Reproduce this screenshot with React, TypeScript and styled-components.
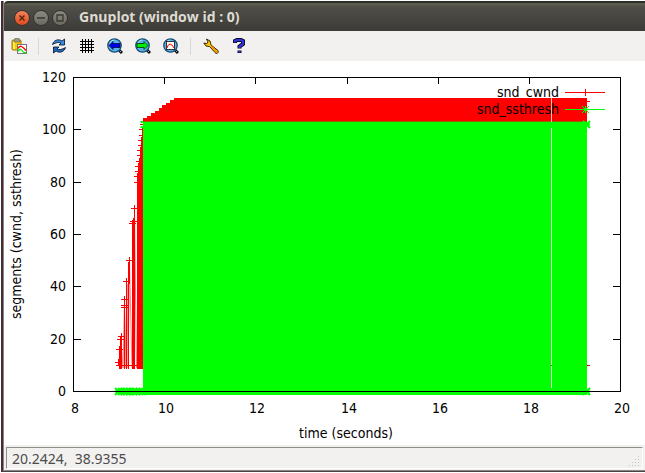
import React from "react";
import styled, { createGlobalStyle, css } from "styled-components";

const GlobalStyle = createGlobalStyle`
  *, *::before, *::after { box-sizing: border-box; }
  body { margin: 0; background: #fff; }
`;

const Desktop = styled.div`
  background: #fff;
  padding: 1px 0 1px 1px;
  overflow: hidden;
`;

const Frame = styled.main`
  background: #fff;
  border-left: 2px solid #452d38;
  border-bottom: 1px solid #4b4148;
`;

const Inner = styled.div`
  border-left: 1px solid #8b8685;
  border-bottom: 1px solid #8b8784;
`;

const TitleBar = styled.header`
  display: flex;
  align-items: center;
  gap: 3px;
  height: 30px;
  padding: 2px 10px 0;
  border-top: 2px solid #2b2f28;
  border-top-left-radius: 4px;
  background: linear-gradient(#5b5b4e 0, #5b5b4e 2px, #504f48 3px, #3c3b37 100%);
`;

const WindowButton = styled.button<{ $close?: boolean }>`
  display: grid;
  place-items: center;
  width: 16px;
  height: 16px;
  padding: 0;
  border: 1px solid #34332f;
  border-radius: 50%;
  color: #383731;
  background: linear-gradient(#8b8a80, #6b6a61);
  ${(p) =>
    p.$close &&
    css`
      color: #5b2411;
      background: linear-gradient(#f5835c, #df4a1c);
    `}
`;

const Title = styled.h1`
  margin: 0 0 2px 8px;
  color: #dfdbd2;
  font: bold 14px/20px "Open Sans", "Noto Sans", sans-serif;
`;

const Toolbar = styled.nav`
  display: flex;
  align-items: center;
  height: 30px;
  padding: 0 1px;
  background: #f2f1f0;
`;

const Tool = styled.button`
  display: grid;
  place-items: center;
  width: 28px;
  height: 28px;
  padding: 0;
  border: 0;
  background: transparent;
`;

const Divider = styled.span`
  width: 1px;
  height: 17px;
  margin: 0 6px 0 5px;
  background: #d9d7d4;
`;

const Plot = styled.svg`
  display: block;
  width: 100%;
  height: auto;
  background: #fff;
  font: 14px "DejaVu Sans Condensed", "DejaVu Sans", sans-serif;
`;

const StatusBar = styled.footer`
  display: flex;
  padding: 2px 2px 1px;
  background: #f2f1f0;
`;

const StatusField = styled.div`
  display: flex;
  flex: 1;
  align-items: flex-start;
  justify-content: space-between;
  height: 22px;
  padding-left: 5px;
  border: 1px solid #fff;
  border-top-color: #8f8e8b;
  border-left-color: #8f8e8b;
  color: #4c4c4c;
  font: 14px/22px "Noto Sans", sans-serif;
  white-space: pre;
`;

const Grip = styled.svg`
  align-self: flex-end;
`;

const iconProps = { width: 16, height: 16, viewBox: "0 0 16 16", "aria-hidden": true };

const PasteIcon = () => (
  <svg {...iconProps}>
    <rect x="1" y="2" width="9" height="10" rx="1" fill="#f6c900" stroke="#9a7600" />
    <rect x="2" y="3" width="2" height="8" fill="#ffe760" />
    <path d="M3 2h1V0h4v2h1v2H3z" fill="#a09b8a" stroke="#6e6444" strokeWidth=".6" />
    <rect x="6.5" y="6.5" width="9" height="9" fill="#fff" stroke="#777" />
    <path d="M7 10.500q1.500-3 3.500-2t4.500 4" fill="none" stroke="#f00" strokeWidth="1.300" />
    <path d="M7 13.500q2-4 4-1t4 2" fill="none" stroke="#0e0" strokeWidth="1.300" />
  </svg>
);

const RefreshIcon = () => (
  <svg {...iconProps} stroke="#020d22" strokeWidth=".8" strokeLinejoin="round">
    <path d="M1.500 6.500C2.500 2.500 7 .3 11 3l2.500-2v6H8l2-2C7.500 3.800 5 4.500 1.500 6.500z" fill="#3b8de0" />
    <path d="M14.500 9.500c-1 4-5.500 6.200-9.500 3.500l-2.500 2V9H8l-2 2c2.500 1.200 5 .5 8.500-1.500z" fill="#1e68bd" />
  </svg>
);

const GridIcon = () => (
  <svg {...iconProps} stroke="#000" shapeRendering="crispEdges">
    <path d="M3.500 1v14M6.500 1v14M9.500 1v14M12.500 1v14M1 3.500h14M1 6.500h14M1 9.500h14M1 12.500h14" />
  </svg>
);

const Lens = ({ children }: { children: React.ReactNode }) => (
  <svg {...iconProps}>
    <path d="M12 12l3 3" stroke="#111" strokeWidth="3" />
    <path d="M12.500 12.500l1.500 1.500" stroke="#60bce8" strokeWidth="1" />
    <circle cx="7.500" cy="7.500" r="6.700" fill="#56b2e9" stroke="#174d73" strokeWidth="1.300" />
    <path d="M3 5q1-3 4-3" stroke="#abe0fa" fill="none" />
    {children}
  </svg>
);

const PreviousIcon = () => (
  <Lens>
    <path d="M2 7.500l4-4v2h7v4H6v2z" fill="#0000e8" stroke="#001040" strokeWidth=".8" />
  </Lens>
);

const NextIcon = () => (
  <Lens>
    <path d="M13 7.500l-4-4v2H2v4h7v2z" fill="#00f000" stroke="#06440c" strokeWidth=".9" />
  </Lens>
);

const FitIcon = () => (
  <Lens>
    <rect x="3.500" y="3.500" width="8" height="8" fill="#fff" stroke="#333" />
    <path d="M4 10q1-4 3-4t4 4" fill="none" stroke="#f00" />
  </Lens>
);

const WrenchIcon = () => (
  <svg {...iconProps}>
    <path
      d="M3.500 1L7 3l1 4 7 5.500q1 2-.7 2.800Q13 16 12 14.500L6.500 8.500 3 8 .8 5l3 .7L5 4z"
      fill="#ffcf08"
      stroke="#3b2600"
      strokeLinejoin="round"
    />
    <path d="M8 8l6 6" stroke="#f08a00" strokeWidth="1.500" />
  </svg>
);

const HelpIcon = () => (
  <svg {...iconProps} fill="none">
    <path d="M4 5V3l2-1h4l2 1v3L8.500 8.500v2M8.500 12.500V15" stroke="#05051f" strokeWidth="4" />
    <path d="M4 4.500V3l2-1h4l2 1v3L8.500 8.500V10M8.500 13v1.500" stroke="#3434dd" strokeWidth="2.200" />
  </svg>
);

const xTicks = [8, 10, 12, 14, 16, 18, 20].map((v, i) => ({ v, x: Math.round(73 + (i * 547) / 6) }));
const yTicks = [120, 100, 80, 60, 40, 20, 0].map((v, i) => ({ v, y: Math.round(77 + (i * 314) / 6) }));

const rampMarks = [
  [134, 182], [134, 176], [135, 171], [135, 166], [136, 161], [137, 155],
  [137, 150], [138, 145], [138, 140], [139, 135], [139, 129],
];

const plusMarks = [
  [134, 208], [133, 221], [132, 223], [129, 260], [126, 281], [124, 299],
  [124, 305], [124, 307], [121, 336], [120, 339], [119, 349], [118, 362], [119, 365],
];

const startCrosses = [118, 121, 124, 126, 129, 133, 136, 139, 142];

const cross = (x: number, y: number) => `M${x - 3} ${y - 3}l7 7m0-7l-7 7M${x - 3} ${y}.5h7`;

const Axes = () => (
  <g stroke="#000" fill="none" shapeRendering="crispEdges">
    <rect x="73.500" y="77.500" width="547" height="314" />
    {xTicks.slice(1, -1).map(({ v, x }) => (
      <path key={v} d={`M${x}.5 77v7M${x}.5 391v-6`} />
    ))}
    {yTicks.slice(1, -1).map(({ v, y }) => (
      <path key={v} d={`M73 ${y}.5h8M620 ${y}.5h-7`} />
    ))}
  </g>
);

const Labels = () => (
  <g>
    {xTicks.map(({ v, x }) => (
      <text key={v} x={x + 2} y="413" textAnchor="middle">{v}</text>
    ))}
    {yTicks.map(({ v, y }) => (
      <text key={v} x="66" y={y + 5} textAnchor="end">{v}</text>
    ))}
    <text x="346" y="438" textAnchor="middle">time (seconds)</text>
    <text transform="translate(21 234) rotate(-90)" textAnchor="middle">segments (cwnd, ssthresh)</text>
  </g>
);

const CwndSeries = () => (
  <g shapeRendering="crispEdges">
    <path
      d="M121 341L123 368 124.500 300 126 368 127 284 128 368 129.500 264 132 368M134.500 212L136.500 368"
      stroke="#ff8080" fill="none" shapeRendering="auto"
    />
    <path
      d="M143 122v-4h4v-2h4v-3h4v-2h4v-3h3v-3h4v-2h4v-3h4v-2h413v24zM143 128h-1v9h-1v10h-1v11h-1v5h-1v10h-1v196h6zM132 369V222h1v-3h1v-14h1v164zM119 369v-23h1v-8h2v31z"
      fill="#f00"
    />
    <path d="M124.500 296v73M126.500 278v91M128.500 262v107M129.500 257v27M121.500 333v12" stroke="#f00" fill="none" />
    <path d={plusMarks.map(([x, y]) => `M${x - 3} ${y}.5h7M${x}.5 ${y - 3}v7`).join("")} stroke="#f00" />
    <path d={rampMarks.map(([x, y]) => `M${x} ${y}.5H143`).join("")} stroke="#f00" />
    <path d="M116 365.500h21M587 101.500h3M587 365.500h3M140 124.500h3" stroke="#f00" />
    <path d="M565 92.500h40M585.500 89v7" stroke="#f00" />
  </g>
);

const SsthreshSeries = () => (
  <g>
    <path d="M143 121h444v274H143z" fill="#0f0" shapeRendering="crispEdges" />
    <path d="M143 121.500h444" stroke="#986000" shapeRendering="crispEdges" />
    <path d="M140 121h3v2h-2zM140 128l1-2h2v2z" fill="#0f0" />
    <path d="M551.500 98v24" stroke="#ffc4c4" />
    <path d="M551.500 128v260" stroke="#d6f0c6" />
    <path d="M551.500 365v1" stroke="#b84b00" />
    <path d={startCrosses.map((x) => cross(x, 391)).join("") + cross(586, 391) + cross(586, 124)} stroke="#0f0" strokeWidth="2" fill="none" />
    <path d={`M565 109.500h40${cross(585, 109)}M585.500 106v7`} stroke="#0f0" fill="none" />
  </g>
);

const gripDots = [
  [9, 1], [6, 4], [9, 4], [3, 7], [6, 7], [9, 7], [0, 10], [3, 10], [6, 10], [9, 10],
];

export default function App() {
  return (
    <Desktop>
      <GlobalStyle />
      <Frame>
        <Inner>
          <TitleBar>
            <WindowButton $close aria-label="Close">
              <svg width="8" height="8" viewBox="0 0 8 8" stroke="currentColor" strokeWidth="1.500"><path d="M1.500 1.500l5 5m0-5l-5 5" /></svg>
            </WindowButton>
            <WindowButton aria-label="Minimize">
              <svg width="8" height="8" viewBox="0 0 8 8" stroke="currentColor" strokeWidth="1.500"><path d="M0 4h8" /></svg>
            </WindowButton>
            <WindowButton aria-label="Maximize">
              <svg width="8" height="8" viewBox="0 0 8 8" stroke="currentColor" strokeWidth="1.300" fill="none"><path d="M1 1h6v6H1z" /></svg>
            </WindowButton>
            <Title>Gnuplot (window id : 0)</Title>
          </TitleBar>
          <Toolbar aria-label="Plot tools">
            <Tool aria-label="Copy to clipboard"><PasteIcon /></Tool>
            <Divider />
            <Tool aria-label="Replot"><RefreshIcon /></Tool>
            <Tool aria-label="Toggle grid"><GridIcon /></Tool>
            <Tool aria-label="Previous zoom"><PreviousIcon /></Tool>
            <Tool aria-label="Next zoom"><NextIcon /></Tool>
            <Tool aria-label="Autoscale"><FitIcon /></Tool>
            <Divider />
            <Tool aria-label="Configure"><WrenchIcon /></Tool>
            <Tool aria-label="Help"><HelpIcon /></Tool>
          </Toolbar>
          <Plot viewBox="4 61 641 384" role="img" aria-label="Segments over time">
            <Axes />
            <Labels />
            <text x="559" y="97" textAnchor="end">snd_cwnd</text>
            <CwndSeries />
            <SsthreshSeries />
            <text x="559" y="114" textAnchor="end">snd_ssthresh</text>
            <path d="M73 391.500h548" stroke="#000" shapeRendering="crispEdges" />
          </Plot>
          <StatusBar>
            <StatusField>
              <output>20.2424,  38.9355</output>
              <Grip width="13" height="13" viewBox="0 0 13 13" aria-hidden="true">
                {gripDots.map(([x, y]) => (
                  <rect key={`${x}-${y}`} x={x} y={y} width="1" height="1" fill="#c5c2be" />
                ))}
              </Grip>
            </StatusField>
          </StatusBar>
        </Inner>
      </Frame>
    </Desktop>
  );
}
